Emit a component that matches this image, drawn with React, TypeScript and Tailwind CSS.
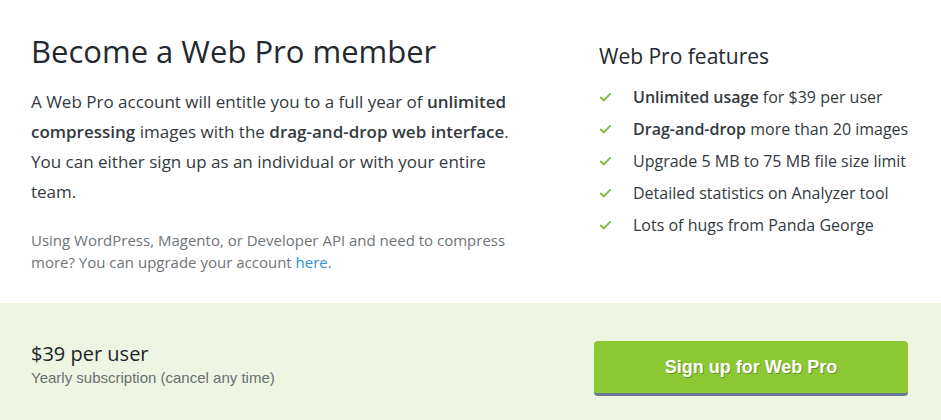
const features: { bold?: string; text: string }[] = [
  { bold: "Unlimited usage", text: " for $39 per user" },
  { bold: "Drag-and-drop", text: " more than 20 images" },
  { text: "Upgrade 5 MB to 75 MB file size limit" },
  { text: "Detailed statistics on Analyzer tool" },
  { text: "Lots of hugs from Panda George" },
];

const Check = () => (
  <svg width="13" height="10" viewBox="0 0 13 10" className="shrink-0" aria-hidden>
    <path d="M1.2 5 L4.8 8.4 L11.6 1.4" fill="none" stroke="#7cc03a" strokeWidth="1.8" />
  </svg>
);

export default function App() {
  return (
    <div className="w-[941px] h-[420px] overflow-hidden bg-white font-['Open_Sans',sans-serif] text-[#2b2f33]">
      {/* Intro + features */}
      <section className="flex h-[303px] px-[31px] pt-[31px]">
        <div className="w-[490px]">
          <h1 className="text-[31px] leading-[40px] text-[#23292f]">Become a Web Pro member</h1>
          <p className="mt-[16px] text-[17px] leading-[30px] text-[#333a40]">
            A Web Pro account will entitle you to a full year of <b className="font-semibold">unlimited compressing</b>{" "}
            images with the <b className="font-semibold">drag-and-drop web interface</b>. You can either sign up as an
            individual or with your entire team.
          </p>
          <p className="mt-[22px] text-[15px] leading-[22px] text-[#6f7478]">
            Using WordPress, Magento, or Developer API and need to compress more? You can upgrade your account{" "}
            <a className="text-[#2d8fdc]">here</a>.
          </p>
        </div>

        <div className="ml-[78px] pt-[10px]">
          <h2 className="text-[21px] leading-[30px] text-[#23292f]">Web Pro features</h2>
          <ul className="mt-[10px] flex flex-col">
            {features.map((f, i) => (
              <li key={i} className="flex h-[32px] items-center text-[16px] text-[#333a40]">
                <span className="flex w-[34px]">
                  <Check />
                </span>
                <span>
                  {f.bold && <b className="font-semibold">{f.bold}</b>}
                  {f.text}
                </span>
              </li>
            ))}
          </ul>
        </div>
      </section>

      {/* Pricing bar */}
      <section className="flex h-[117px] items-start justify-between bg-[#eef6e2] pl-[31px] pr-[33px] pt-[38px]">
        <div>
          <div className="text-[20px] leading-[26px] text-[#1f2428]">$39 per user</div>
          <div className="font-['Liberation_Sans',Arial,sans-serif] text-[15px] leading-[22px] text-[#6a6f73]">
            Yearly subscription (cancel any time)
          </div>
        </div>
        <button className="flex h-[55px] w-[314px] items-center justify-center rounded-[4px] border-b-[3px] border-[#6b7793] bg-[#8bc834] font-['Liberation_Sans',Arial,sans-serif] text-[18px] font-bold text-white [text-shadow:1px_1px_0_rgba(60,80,20,0.45)]">
          Sign up for Web Pro
        </button>
      </section>
    </div>
  );
}
